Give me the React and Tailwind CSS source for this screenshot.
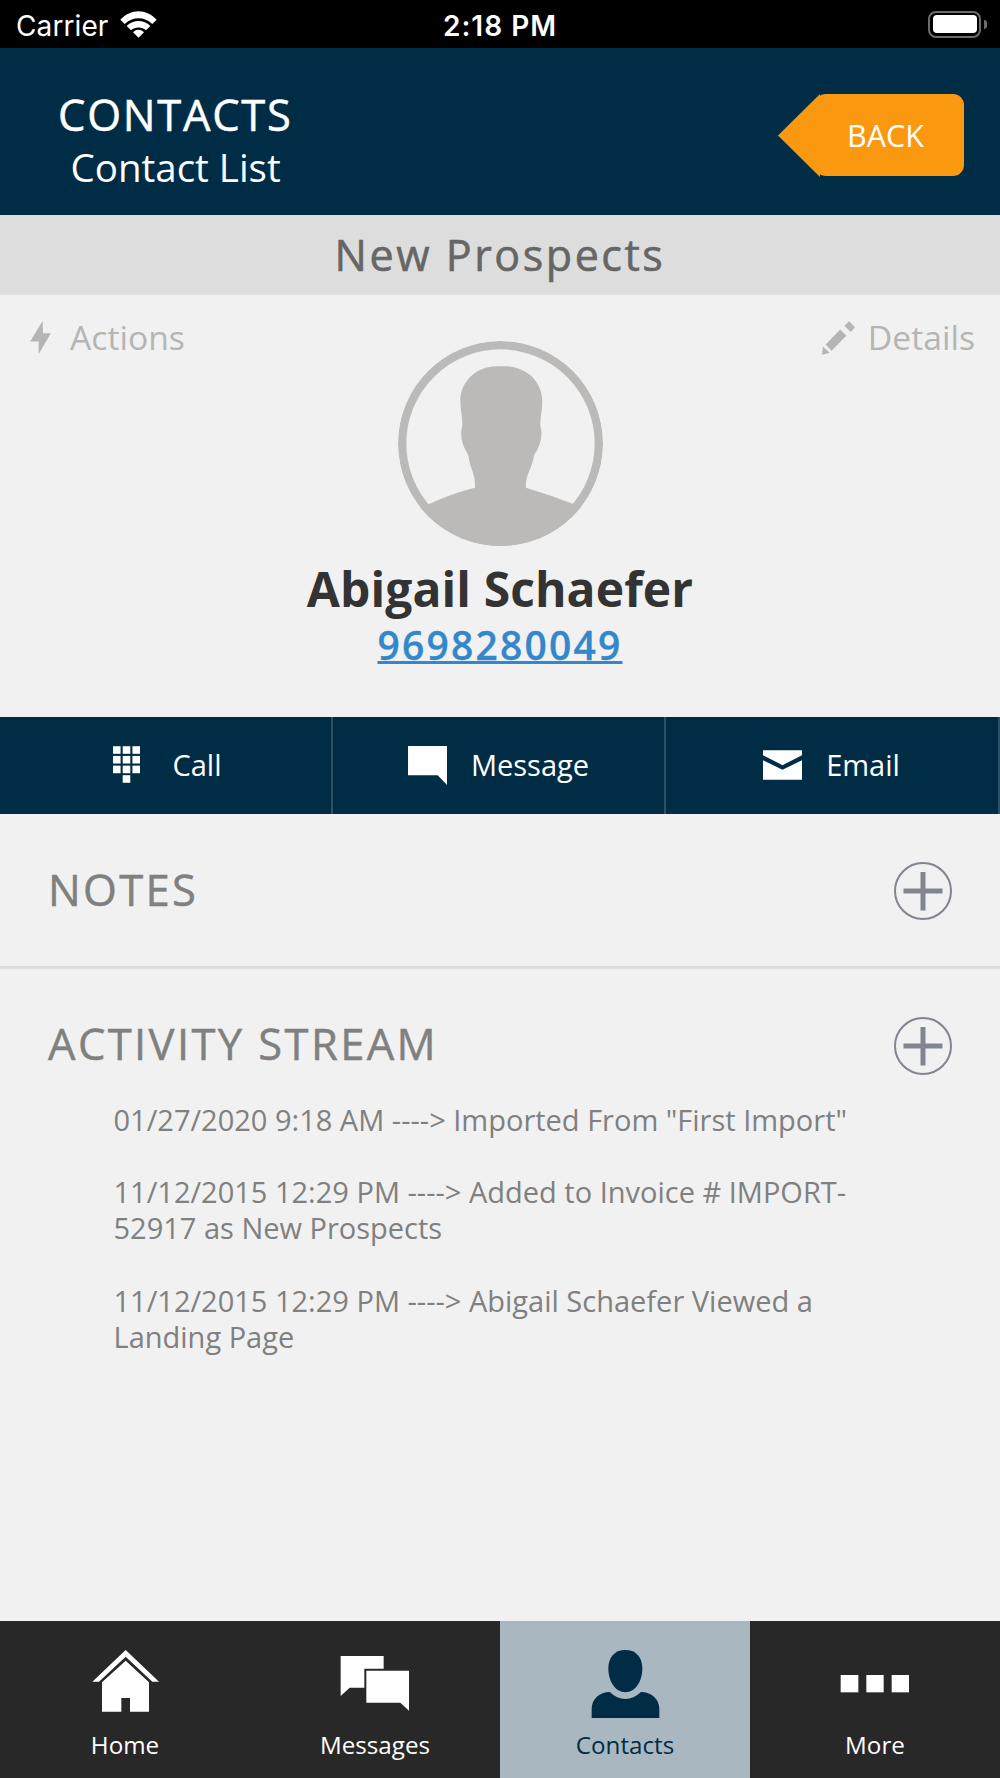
import React, { useState } from "react";

const activities = [
  '01/27/2020 9:18 AM ----> Imported From "First Import"',
  "11/12/2015 12:29 PM ----> Added to Invoice # IMPORT-52917 as New Prospects",
  "11/12/2015 12:29 PM ----> Abigail Schaefer Viewed a Landing Page",
];

function WifiIcon() {
  return (
    <svg className="w-[37px] h-[27px]" viewBox="360 30 111 81" fill="currentColor">
      <path d="M361 56C392 22 439 22 470 56L457 69C434 46 397 46 374 69Z" />
      <path d="M380 75C400 55 431 55 451 75L438 88C425 77 406 77 393 88Z" />
      <path d="M399 94C408 84 423 84 432 94L415.500 110.500Z" />
    </svg>
  );
}

function BoltIcon() {
  return (
    <svg className="w-[21px] h-[33px]" viewBox="0 0 63 100" fill="currentColor">
      <path d="M38 0L39 37H63L26 100V62H0Z" />
    </svg>
  );
}

function PencilIcon() {
  return (
    <svg className="w-[33px] h-[34px]" viewBox="0 0 100 101" fill="currentColor">
      <path d="M3 76L23 95L0 101Z" />
      <path d="M55 25L74 44L29 89L11 70Z" />
      <path d="M82 0L100 18L87 32L68 13Z" />
    </svg>
  );
}

function Avatar() {
  return (
    <svg className="w-[205px] h-[205px]" viewBox="54 62 615 615">
      <clipPath id="avatar-clip">
        <circle cx="361.500" cy="369.500" r="307.500" />
      </clipPath>
      <g clipPath="url(#avatar-clip)" fill="#bbbab8">
        <circle cx="361.500" cy="369.500" r="295" fill="none" stroke="#bbbab8" strokeWidth="25" />
        <path d="M350 138H378C438 138 487 183 487 243C487 270 480 290 481 316C490 345 482 375 462 405C457 446 436 460 438 502Q512 524 580 551L669 580V680H54V580L146 552Q212 520 285 502C287 460 270 446 265 405C246 375 238 345 247 316C248 290 241 270 241 243C241 183 290 138 350 138Z" />
      </g>
    </svg>
  );
}

function KeypadIcon() {
  return (
    <svg className="w-[27px] h-[37px] ml-1 mr-[32px]" viewBox="0 0 82 111" fill="currentColor">
      {[0, 29.5, 59].map((y) =>
        [0, 29.5, 59].map((x) => <rect key={`${x}-${y}`} x={x} y={y} width="23" height="23" />)
      )}
      <rect x="29.500" y="88" width="23" height="23" />
    </svg>
  );
}

function BubbleIcon() {
  return (
    <svg className="w-[39px] h-[39px] mt-0.5 mr-[24px]" viewBox="0 0 117 117" fill="currentColor">
      <path d="M0 0H117V117L89 88H0Z" />
    </svg>
  );
}

function MailIcon() {
  return (
    <svg className="w-[39px] h-[30px] mt-0.5 -ml-px mr-[24px]" viewBox="0 0 117 89" fill="currentColor">
      <path d="M0 0H117V15L58.500 45L0 15Z" />
      <path d="M0 30L58.500 59L117 30V89H0Z" />
    </svg>
  );
}

function PlusButton() {
  return (
    <button className="shrink-0 text-[#80858f]">
      <svg className="w-[58px] h-[58px]" viewBox="0 0 58 58" fill="none" stroke="currentColor">
        <circle cx="29" cy="29" r="28" strokeWidth="2" />
        <path d="M29 10V48.500M9.500 29H48.500" strokeWidth="5" />
      </svg>
    </button>
  );
}

const tabs = [
  {
    name: "Home",
    viewBox: "276 150 204 204",
    icon: (
      <>
        <path d="M377 150L477 245H457L377 170L297 245H277Z" />
        <path d="M377 182L447 247V335H390V294H364V335H306V247Z" />
      </>
    ),
  },
  {
    name: "Messages",
    viewBox: "1024 150 204 204",
    icon: (
      <>
        <path d="M1020 168H1149V206H1091V263H1047L1020 288Z" />
        <path d="M1097 212H1225V332L1199 308H1097Z" />
      </>
    ),
  },
  {
    name: "Contacts",
    viewBox: "277 150 204 204",
    icon: (
      <>
        <path d="M377 150C410 150 428 173 428 205C428 243 408 277 377 277C346 277 326 243 326 205C326 173 344 150 377 150Z" />
        <path d="M276 354V328C276 296 300 276 330 276C345 290 360 297 377 297C394 297 409 290 424 276C455 276 479 296 479 328V354Z" />
      </>
    ),
  },
  {
    name: "More",
    viewBox: "1024 150 204 204",
    icon: (
      <>
        <rect x="1020" y="225" width="53" height="52" />
        <rect x="1097" y="225" width="52" height="52" />
        <rect x="1173" y="225" width="52" height="52" />
      </>
    ),
  },
];

export default function App() {
  const [activeTab, setActiveTab] = useState("Contacts");

  return (
    <div className="w-[1000px] h-[1778px] flex flex-col overflow-hidden bg-[#f1f1f1] font-['Open_Sans',sans-serif]">
      {/* Status bar */}
      <div className="h-12 shrink-0 bg-black text-white grid grid-cols-3 items-center font-['Inter',sans-serif] text-[28px]">
        <div className="flex items-center pl-4 gap-3">
          <span className="pt-[3px] tracking-[0.1px]">Carrier</span>
          <WifiIcon />
        </div>
        <span className="pt-[3px] text-center font-semibold tracking-[1px]">2:18 PM</span>
        <div className="flex items-center justify-end pr-[13px] gap-[3px]">
          <div className="w-[53px] h-[27px] rounded-[8px] border-2 border-[#6c6c6c] p-[2.500px]">
            <div className="h-full rounded-[4px] bg-white" />
          </div>
          <div className="w-[3px] h-[9px] rounded-r-full bg-[#6c6c6c]" />
        </div>
      </div>

      {/* Header */}
      <header className="h-[167px] shrink-0 bg-[#002d45] text-white flex justify-between items-start">
        <div className="pt-[38px] pl-[58px]">
          <h1 className="text-[43.500px] leading-[58px] tracking-[1.740px] [-webkit-text-stroke:0.5px]">CONTACTS</h1>
          <p className="pl-[12.500px] -mt-0.5 text-[38.500px] leading-[50px]">Contact List</p>
        </div>
        <button className="mt-[45.500px] mr-9 flex items-center">
          <svg className="w-[42px] h-[83px] -mr-[5px]" viewBox="0 0 42 83" fill="#fa9810">
            <path d="M0 41.500L42 0V83Z" />
          </svg>
          <span className="w-[149px] h-[82px] rounded-[11px] bg-[#fa9810] flex items-center justify-center pt-0.5 pr-[8px] text-[30.500px]">
            BACK
          </span>
        </button>
      </header>

      <div className="h-20 shrink-0 bg-[#dddddd] text-[#666666] text-center text-[43px] leading-[80px] tracking-[2.550px] [-webkit-text-stroke:0.6px]">
        New Prospects
      </div>

      {/* Profile */}
      <section className="h-[422px] shrink-0 flex flex-col items-center">
        <div className="w-full pt-[22px] pl-[30px] pr-[25px] flex justify-between text-[#b5b5b5] text-[33.700px] leading-[41px]">
          <button className="flex items-center gap-[19px]">
            <BoltIcon />
            Actions
          </button>
          <button className="flex items-center gap-[13px]">
            <PencilIcon />
            Details
          </button>
        </div>
        <div className="-mt-[17px] ml-px">
          <Avatar />
        </div>
        <h2 className="mt-4 text-[48px] leading-[54px] tracking-[0.1px] font-bold text-[#333333]">Abigail Schaefer</h2>
        <a
          href="#"
          className="mt-0.5 text-[39px] leading-[54px] font-semibold tracking-[2.200px] text-[#3388cc] underline decoration-[2.500px] underline-offset-[1px] [text-decoration-skip-ink:none] [-webkit-text-stroke:0.3px]"
        >
          9698280049
        </a>
      </section>

      {/* Quick actions */}
      <div className="h-[97px] shrink-0 grid grid-cols-[333px_333px_334px] bg-[#002d45] text-white text-[29px]">
        <button className="flex items-center justify-center pb-[3px] border-r-2 border-[#2c5064]">
          <KeypadIcon />
          <span className="pt-px">Call</span>
        </button>
        <button className="flex items-center justify-center pb-[3px] border-r-2 border-[#2c5064]">
          <BubbleIcon />
          <span className="pt-px">Message</span>
        </button>
        <button className="flex items-center justify-center pb-[3px] border-r-2 border-[#2c5064]">
          <MailIcon />
          <span className="pt-px">Email</span>
        </button>
      </div>

      {/* Notes */}
      <section className="h-[155px] shrink-0 border-b-3 border-[#dddddd] pl-12 pr-12 pt-0.5 flex items-center justify-between text-[#808080]">
        <h3 className="-mt-0.5 text-[43.500px] tracking-[2.300px] [-webkit-text-stroke:0.5px]">NOTES</h3>
        <PlusButton />
      </section>

      {/* Activity stream */}
      <section className="grow text-[#808080]">
        <div className="h-[154px] px-12 flex items-center justify-between">
          <h3 className="-mt-1 text-[43.500px] tracking-[2.400px] [-webkit-text-stroke:0.5px]">ACTIVITY STREAM</h3>
          <PlusButton />
        </div>
        <ul className="-mt-[21.500px] ml-[113.500px] w-[760px] space-y-[36.250px] text-[29px] leading-[36.250px]">
          {activities.map((a, i) => (
            <li key={i}>{a}</li>
          ))}
        </ul>
      </section>

      {/* Bottom tabs */}
      <nav className="h-[157px] shrink-0 grid grid-cols-4 bg-[#282828]">
        {tabs.map((tab) => (
          <button
            key={tab.name}
            onClick={() => setActiveTab(tab.name)}
            className={
              activeTab === tab.name
                ? "flex flex-col items-center pt-[29px] bg-[#a9b8c0] text-[#002d45]"
                : "flex flex-col items-center pt-[29px] text-white"
            }
          >
            <svg className="w-[68px] h-[68px] ml-px overflow-visible" viewBox={tab.viewBox} fill="currentColor">
              {tab.icon}
            </svg>
            <span className="mt-[11px] text-[24.200px] leading-8">{tab.name}</span>
          </button>
        ))}
      </nav>
    </div>
  );
}
